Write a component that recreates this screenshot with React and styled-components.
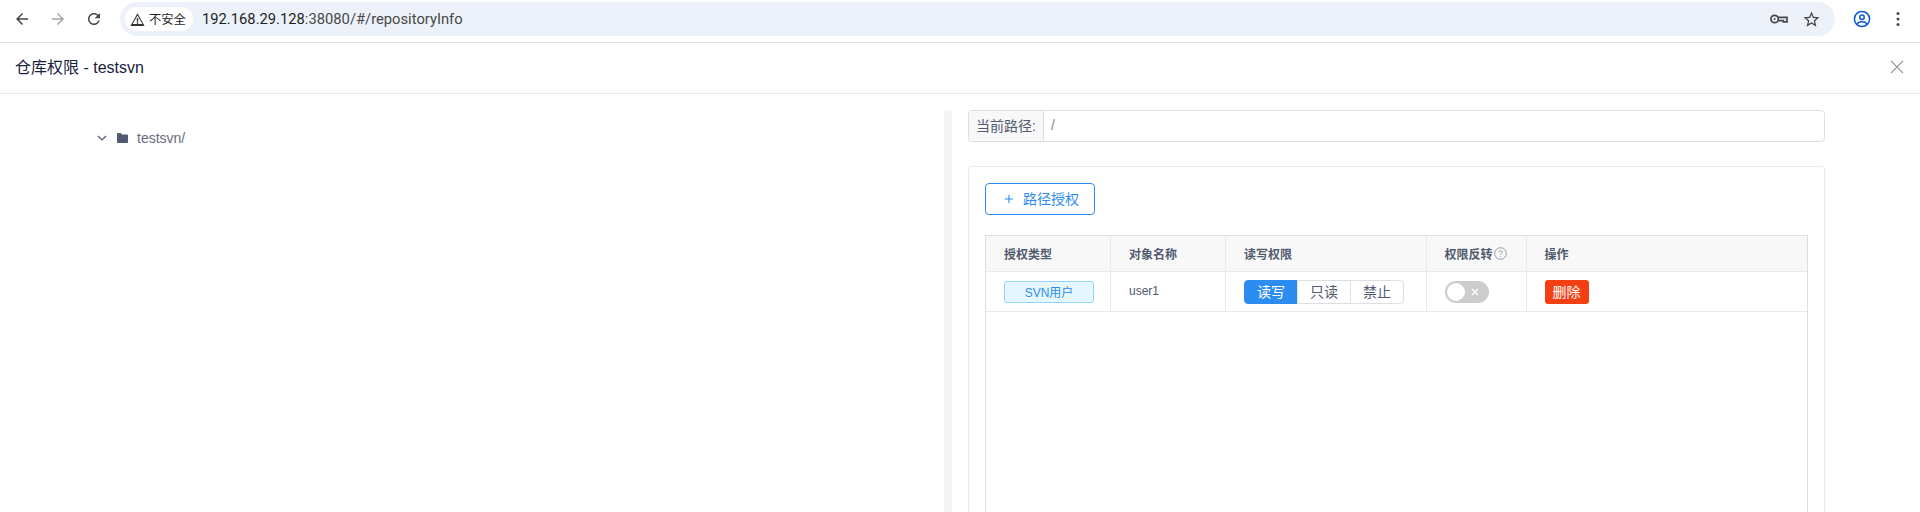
import React from "react";
import styled, { createGlobalStyle } from "styled-components";

const GlobalStyle = createGlobalStyle`
  html, body {
    margin: 0;
    height: 100%;
    background: #fff;
    overflow: hidden;
  }
  * {
    box-sizing: border-box;
  }
  body {
    font-family: "Liberation Sans", "Noto Sans CJK SC", sans-serif;
    color: #515a6e;
  }
`;

const columns = [
  { title: "授权类型", width: "125px" },
  { title: "对象名称", width: "115px" },
  { title: "读写权限", width: "200.5px" },
  { title: "权限反转", width: "100px", help: true },
  { title: "操作", width: "1fr" },
];

const Icon = ({ d, size = 16, color = "#474747" }) => (
  <svg width={size} height={size} viewBox="0 0 24 24" fill={color}>
    <path d={d} />
  </svg>
);

const BrowserBar = () => (
  <Chrome>
    <NavButton>
      <Icon size={18} d="M20 11H7.83l5.59-5.59L12 4l-8 8 8 8 1.41-1.41L7.83 13H20v-2z" />
    </NavButton>
    <NavButton>
      <Icon size={18} color="#a8a8a8" d="M4 11h12.17l-5.59-5.59L12 4l8 8-8 8-1.41-1.41L16.17 13H4v-2z" />
    </NavButton>
    <NavButton>
      <Icon
        size={18}
        d="M17.65 6.35C16.2 4.9 14.21 4 12 4c-4.42 0-7.99 3.58-7.99 8s3.57 8 7.99 8c3.73 0 6.84-2.55 7.73-6h-2.08c-.82 2.33-3.04 4-5.65 4-3.31 0-6-2.69-6-6s2.69-6 6-6c1.66 0 3.14.69 4.22 1.78L13 11h7V4l-2.35 2.35z"
      />
    </NavButton>
    <Omnibox>
      <SecurityChip>
        <Icon size={17} color="#333" d="M12 6.5 18.9 18.5H5.1L12 6.5zM12 3 2 21h20L12 3zm1 13h-2v2h2v-2zm0-6h-2v5h2v-5z" />
        不安全
      </SecurityChip>
      <Url>
        192.168.29.128<UrlRest>:38080/#/repositoryInfo</UrlRest>
      </Url>
      <OmniIcons>
        <svg width="18" height="10" viewBox="0 0 18 10" fill="none" stroke="#474747" strokeWidth="1.7">
          <circle cx="4.6" cy="5" r="3.7" />
          <circle cx="4.6" cy="5" r="1" fill="#474747" stroke="none" />
          <path d="M8 3.300h9v4.600h-3.600V6.700H8" />
        </svg>
        <Icon
          size={19}
          d="M22 9.24l-7.19-.62L12 2 9.19 8.63 2 9.24l5.46 4.73L5.82 21 12 17.27 18.18 21l-1.63-7.03L22 9.24zM12 15.4l-3.76 2.27 1-4.28-3.32-2.88 4.38-.38L12 6.1l1.71 4.04 4.38.38-3.32 2.88 1 4.28L12 15.4z"
        />
      </OmniIcons>
    </Omnibox>
    <ProfileGroup>
      <NavButton>
        <svg width="18" height="18" viewBox="0 0 18 18" fill="none" stroke="#0b57d0" strokeWidth="1.5">
          <circle cx="9" cy="9" r="7.6" />
          <circle cx="9" cy="7.2" r="2.2" />
          <path d="M3.8 14c1.4-1.6 3.2-2.2 5.2-2.2s3.8.6 5.2 2.2" />
        </svg>
      </NavButton>
      <NavButton>
        <svg width="4" height="16" viewBox="0 0 4 16" fill="#474747">
          <circle cx="2" cy="2.5" r="1.5" />
          <circle cx="2" cy="8" r="1.5" />
          <circle cx="2" cy="13.5" r="1.5" />
        </svg>
      </NavButton>
    </ProfileGroup>
  </Chrome>
);

const App = () => {
  return (
    <>
      <GlobalStyle />
      <BrowserBar />
      <DrawerHeader>
        <DrawerTitle>仓库权限 - testsvn</DrawerTitle>
        <CloseButton>
          <svg width="14" height="14" viewBox="0 0 14 14" stroke="#999" strokeWidth="1.1">
            <path d="M1 1l12 12M13 1L1 13" />
          </svg>
        </CloseButton>
      </DrawerHeader>
      <DrawerBody>
        <TreePane>
          <TreeNode>
            <svg width="10" height="10" viewBox="0 0 10 10" fill="none" stroke="#515a6e" strokeWidth="1.2">
              <path d="M1 3 5 7l4-4" />
            </svg>
            <FolderIcon width="12" height="10" viewBox="0 0 12 10" fill="#515a6e">
              <path d="M0 1c0-.5.4-.9.9-.9h3l1 1.300h5.200c.5 0 .9.4.9.9V9c0 .5-.4.900-.9.900H.9C.4 9.900 0 9.500 0 9V1z" />
            </FolderIcon>
            <TreeLabel>testsvn/</TreeLabel>
          </TreeNode>
        </TreePane>
        <Splitter />
        <RightPane>
          <PathInput>
            <PathLabel>当前路径:</PathLabel>
            <PathValue>/</PathValue>
          </PathInput>
          <Card>
            <AddButton>
              <svg width="10" height="10" viewBox="0 0 10 10" stroke="#2d8cf0" strokeWidth="1.1">
                <path d="M5 1v8M1 5h8" />
              </svg>
              <AddLabel>路径授权</AddLabel>
            </AddButton>
            <Table>
              <HeaderRow>
                {columns.map((col) => (
                  <HeaderCell key={col.title}>
                    {col.title}
                    {col.help && (
                      <HelpIcon width="13" height="13" viewBox="0 0 13 13" fill="none" stroke="#808695" strokeWidth="0.8">
                        <circle cx="6.500" cy="6.500" r="5.800" />
                        <path d="M4.800 5.200c0-1 .8-1.600 1.700-1.600s1.700.6 1.700 1.500c0 1.300-1.700 1.300-1.700 2.600M6.500 9v.8" />
                      </HelpIcon>
                    )}
                  </HeaderCell>
                ))}
              </HeaderRow>
              <BodyRow>
                <BodyCell>
                  <TypeTag>SVN用户</TypeTag>
                </BodyCell>
                <BodyCell>
                  <UserName>user1</UserName>
                </BodyCell>
                <BodyCell>
                  <RadioGroup>
                    <RadioItem $active>读写</RadioItem>
                    <RadioItem>只读</RadioItem>
                    <RadioItem>禁止</RadioItem>
                  </RadioGroup>
                </BodyCell>
                <BodyCell>
                  <Switch>
                    <SwitchKnob />
                    <SwitchMark width="8" height="8" viewBox="0 0 8 8" stroke="#fff" strokeWidth="1.400">
                      <path d="M1 1l6 6M7 1L1 7" />
                    </SwitchMark>
                  </Switch>
                </BodyCell>
                <BodyCell>
                  <DeleteButton>删除</DeleteButton>
                </BodyCell>
              </BodyRow>
            </Table>
          </Card>
        </RightPane>
      </DrawerBody>
    </>
  );
};

const Chrome = styled.div`
  display: flex;
  align-items: center;
  height: 43px;
  padding: 2px 4px 6px;
  background: #fff;
  border-bottom: 1px solid #e0e0e0;
  font-family: Roboto, "Noto Sans CJK SC", sans-serif;
`;

const NavButton = styled.div`
  display: flex;
  align-items: center;
  justify-content: center;
  width: 36px;
  height: 34px;
`;

const Omnibox = styled.div`
  display: flex;
  align-items: center;
  width: 1715px;
  height: 34px;
  margin-left: 8px;
  padding-left: 5px;
  border-radius: 17px;
  background: #edf2fa;
`;

const SecurityChip = styled.div`
  display: flex;
  align-items: center;
  gap: 3px;
  width: 68px;
  height: 24px;
  padding-left: 4px;
  border-radius: 12px;
  background: #fff;
  color: #1f1f1f;
  font-size: 12.300px;
`;

const Url = styled.div`
  margin-left: 9px;
  padding-bottom: 1px;
  color: #1f1f1f;
  font-size: 14.750px;
`;

const UrlRest = styled.span`
  color: #474747;
`;

const OmniIcons = styled.div`
  display: flex;
  align-items: center;
  gap: 14px;
  margin-left: auto;
  margin-right: 14px;
`;

const ProfileGroup = styled.div`
  display: flex;
  margin-left: 9px;
`;

const DrawerHeader = styled.div`
  display: flex;
  align-items: center;
  justify-content: space-between;
  height: 51px;
  padding: 0 15px 2px;
  border-bottom: 1px solid #e8eaec;
`;

const DrawerTitle = styled.div`
  padding-bottom: 2px;
  color: #17233d;
  font-size: 16px;
`;

const CloseButton = styled.div`
  display: flex;
  margin-right: 1px;
`;

const DrawerBody = styled.div`
  display: flex;
  height: 418px;
  padding-top: 16px;
  overflow: hidden;
`;

const TreePane = styled.div`
  width: 944px;
  padding: 16px 0 0 97px;
`;

const TreeNode = styled.div`
  display: flex;
  align-items: center;
  height: 24px;
`;

const FolderIcon = styled.svg`
  margin-left: 10px;
`;

const TreeLabel = styled.span`
  margin-left: 8px;
  font-size: 14px;
  color: #666d7e;
`;

const Splitter = styled.div`
  flex: none;
  width: 8px;
  height: 100%;
  border-radius: 2px 2px 0 0;
  background: #f5f5f5;
`;

const RightPane = styled.div`
  display: flex;
  flex-direction: column;
  gap: 24px;
  width: 873px;
  padding-left: 16px;
`;

const PathInput = styled.div`
  display: flex;
  flex: none;
  height: 32px;
  border: 1px solid #dcdee2;
  border-radius: 4px;
  font-size: 14px;
`;

const PathLabel = styled.div`
  display: flex;
  align-items: center;
  width: 75px;
  padding: 0 0 2px 7px;
  border-right: 1px solid #dcdee2;
  border-radius: 4px 0 0 4px;
  background: #f8f8f9;
`;

const PathValue = styled.div`
  display: flex;
  align-items: center;
  padding: 0 0 2px 7px;
  font-size: 14px;
  color: #808695;
`;

const Card = styled.div`
  flex: none;
  height: 400px;
  padding: 16px;
  border: 1px solid #e8eaec;
  border-radius: 4px;
`;

const AddButton = styled.div`
  display: flex;
  align-items: center;
  gap: 9px;
  width: 110px;
  height: 32px;
  padding-left: 18px;
  border: 1px solid #2d8cf0;
  border-radius: 4px;
  color: #2d8cf0;
  font-size: 14px;
`;

const AddLabel = styled.span`
  margin-bottom: 2px;
`;

const Table = styled.div`
  height: 300px;
  margin-top: 20px;
  border: 1px solid #dcdee2;
  border-bottom: 0;
  font-size: 12px;
`;

const Row = styled.div`
  display: grid;
  grid-template-columns: ${columns.map((col) => col.width).join(" ")};
  border-bottom: 1px solid #e8eaec;
`;

const HeaderRow = styled(Row)`
  height: 36px;
  background: #f8f8f9;
`;

const BodyRow = styled(Row)`
  height: 40px;
`;

const HeaderCell = styled.div`
  display: flex;
  align-items: center;
  padding-left: 18px;
  border-right: 1px solid #e8eaec;
  font-weight: 700;

  &:last-child {
    border-right: 0;
  }
`;

const BodyCell = styled.div`
  display: flex;
  align-items: center;
  padding-left: 18px;
  border-right: 1px solid #e8eaec;

  &:last-child {
    border-right: 0;
  }
`;

const HelpIcon = styled.svg`
  margin-left: 1px;
`;

const UserName = styled.span`
  margin-bottom: 1px;
`;

const TypeTag = styled.div`
  display: flex;
  align-items: center;
  justify-content: center;
  width: 90px;
  height: 22px;
  padding-bottom: 1px;
  border: 1px solid #91d5ff;
  border-radius: 3px;
  background: #e6f7ff;
  color: #2d8cf0;
`;

const RadioGroup = styled.div`
  display: flex;
  height: 24px;
`;

const RadioItem = styled.div`
  display: flex;
  align-items: center;
  justify-content: center;
  width: 54px;
  margin-left: -1px;
  padding-bottom: 2px;
  border: 1px solid ${(p) => (p.$active ? "#2d8cf0" : "#dcdee2")};
  background: ${(p) => (p.$active ? "#2d8cf0" : "#fff")};
  color: ${(p) => (p.$active ? "#fff" : "#515a6e")};
  font-size: 14px;

  &:first-child {
    margin-left: 0;
    border-radius: 4px 0 0 4px;
  }
  &:last-child {
    border-radius: 0 4px 4px 0;
  }
`;

const Switch = styled.div`
  display: flex;
  align-items: center;
  width: 44px;
  height: 22px;
  border-radius: 11px;
  background: #ccc;
`;

const SwitchKnob = styled.div`
  width: 18px;
  height: 18px;
  margin-left: 2px;
  border-radius: 50%;
  background: #fff;
`;

const SwitchMark = styled.svg`
  margin-left: 6px;
`;

const DeleteButton = styled.div`
  display: flex;
  align-items: center;
  justify-content: center;
  width: 44px;
  height: 24px;
  padding-bottom: 2px;
  border-radius: 3px;
  background: #f33f14;
  color: #fff;
  font-size: 14px;
`;

export default App;
